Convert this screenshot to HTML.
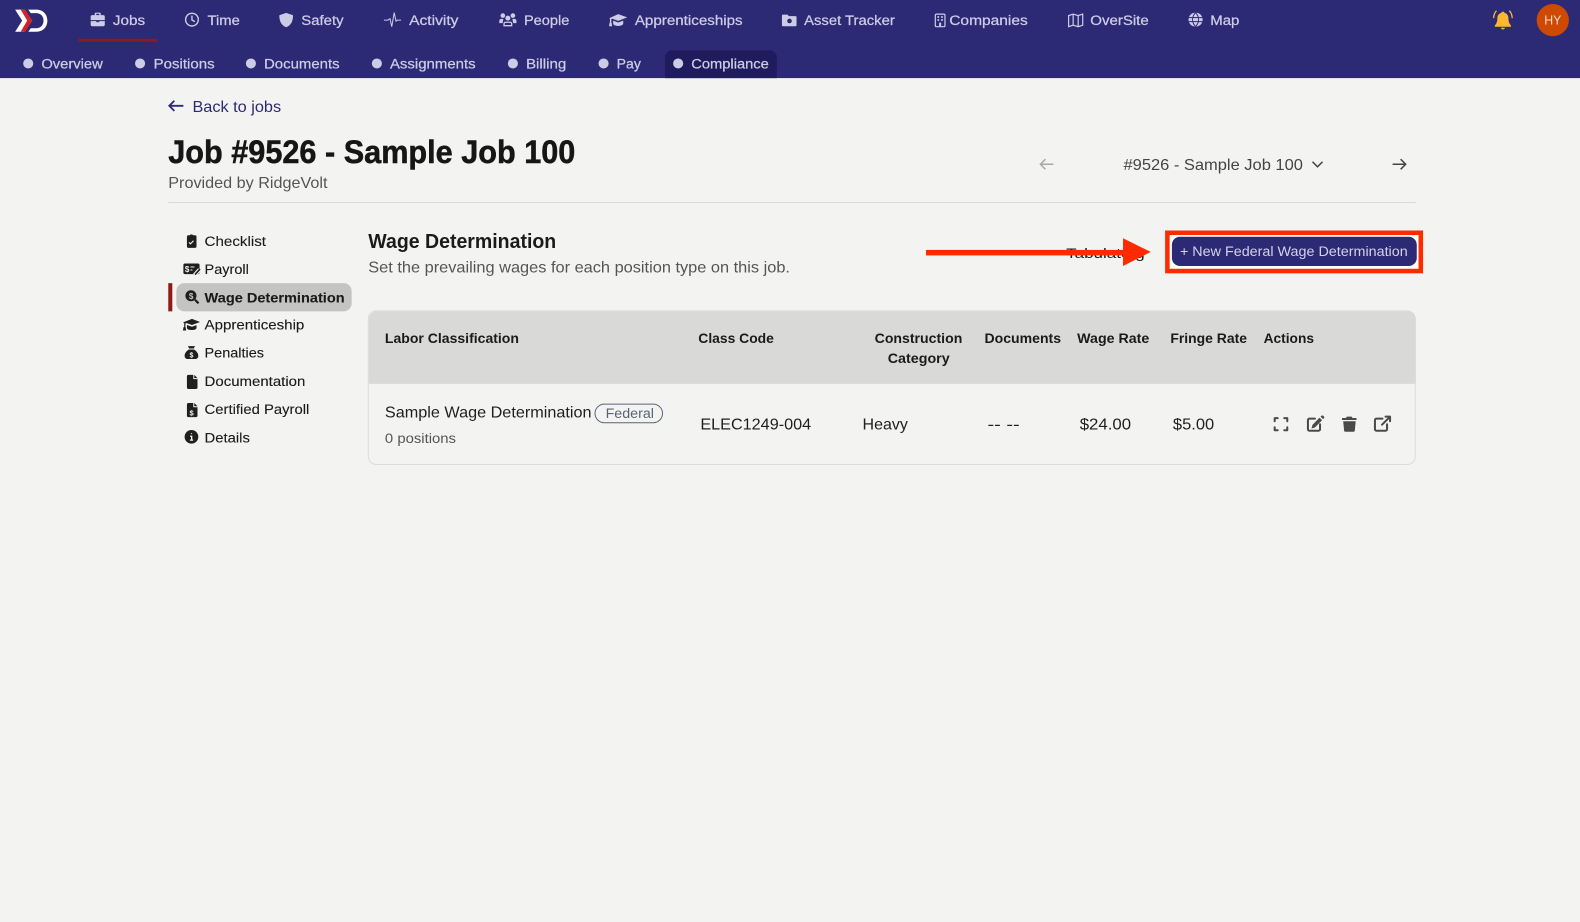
<!DOCTYPE html>
<html lang="en"><head><meta charset="utf-8"><title>Wage Determination</title>
<style>
html,body{margin:0;padding:0;background:#f3f3f1;width:1580px;height:922px;overflow:hidden}
svg{display:block}
text{font-family:"Liberation Sans",sans-serif}
.n{font-size:14px;fill:#cdcce6;stroke:#cdcce6;stroke-width:.25px}
.s{font-size:14px;fill:#1b1b1b;stroke:#1b1b1b;stroke-width:.12px}
.h{font-size:14px;font-weight:bold;fill:#1a1a1a}
.b{font-size:16px;fill:#1f1f1f}
.g{font-size:16px;fill:#555}
.ic{fill:#cdcce6}
.il{fill:none;stroke:#cdcce6;stroke-width:1.4}
.d{fill:#1f1f1f}
.a{fill:none;stroke:#4a4a4a;stroke-width:2;stroke-linecap:round;stroke-linejoin:round}
</style></head><body>
<svg xmlns="http://www.w3.org/2000/svg" width="1580" height="922" viewBox="0 0 1568 915" preserveAspectRatio="none">
<rect width="1568" height="915" fill="#f3f3f1"/>
<rect width="1568" height="77.5" fill="#2c2a75"/>

<!-- logo -->
<path d="M15 9.500h9l8 11-8 11h-9l7-11z" fill="#fff"/>
<path d="M20.500 9.500h4.500l7 11-7 11h-4.500l6.500-11z" fill="#d2232a"/>
<path d="M28 9.500h8c6.500 0 11 4.500 11 11s-4.500 11-11 11h-8l2.500-3.500h5.500c4.500 0 7.200-3.200 7.200-7.500s-2.700-7.500-7.200-7.500h-5.500z" fill="#fff"/>

<!-- main nav -->
<rect x="78" y="38.500" width="78" height="3" fill="#8f1a1a"/>
<path class="ic" d="M90 16.500a1.500 1.500 0 0 1 1.500-1.500h2.500v-1.500a1 1 0 0 1 1-1h4a1 1 0 0 1 1 1V15h2.500a1.500 1.500 0 0 1 1.500 1.500V20h-14zM95.500 13.700V15h3v-1.300zM90 21h5.500v1h3v-1h5.500v3.500a1.500 1.500 0 0 1-1.500 1.500h-11a1.500 1.500 0 0 1-1.500-1.500z"/>
<text class="n" x="112" y="25" textLength="32" lengthAdjust="spacingAndGlyphs">Jobs</text>
<circle class="il" cx="190.500" cy="19.500" r="6.300"/><path class="il" d="M190.500 15.500v4.300l2.800 1.700"/>
<text class="n" x="206" y="25" textLength="32" lengthAdjust="spacingAndGlyphs">Time</text>
<path class="ic" d="M284 12.800l6.800 2.300c0 5.500-1.500 9.600-6.800 12-5.300-2.400-6.800-6.500-6.800-12z"/>
<text class="n" x="299" y="25" textLength="42" lengthAdjust="spacingAndGlyphs">Safety</text>
<path class="il" style="stroke-width:1" d="M381 20h4l2-1.500 1.800 8 2.400-14 1.800 8.500 1.200-1h3.800"/>
<text class="n" x="406" y="25" textLength="49" lengthAdjust="spacingAndGlyphs">Activity</text>
<circle class="ic" cx="499" cy="15.500" r="2.300"/><circle class="ic" cx="509" cy="15.500" r="2.300"/><circle class="ic" cx="504" cy="18" r="2.500"/>
<path class="ic" d="M495.500 23v-2.500c0-1 1-1.800 2-1.800h2l-.8 4.300zM512.500 23v-2.500c0-1-1-1.800-2-1.800h-2l.8 4.300z"/>
<path fill="none" stroke="#cdcce6" stroke-width="1.300" d="M500.200 25.500v-1.800c0-1 .8-1.600 1.700-1.600h4.200c.9 0 1.700.6 1.700 1.600v1.800z"/>
<text class="n" x="520" y="25" textLength="45" lengthAdjust="spacingAndGlyphs">People</text>
<path class="ic" d="M613.500 14l9 3.300-9 3.400-6-2.200-.8.4v4.100h-1.400v-4.600l-.8-.3z"/><path class="ic" d="M608.500 20.500l5 1.800 5-1.800v3c0 1.300-2.300 2.300-5 2.300s-5-1-5-2.300z"/><path class="ic" d="M605 22.500h1.900l.6 3.500h-3.100z"/>
<text class="n" x="630" y="25" textLength="107" lengthAdjust="spacingAndGlyphs">Apprenticeships</text>
<path class="ic" d="M777 14.500h4.500l1.500 1.500h6.500a1 1 0 0 1 1 1v8a1 1 0 0 1-1 1H777a1 1 0 0 1-1-1V15.500a1 1 0 0 1 1-1z"/><circle cx="783.500" cy="20.800" r="2.300" fill="#2c2a75"/>
<text class="n" x="798" y="25" textLength="90" lengthAdjust="spacingAndGlyphs">Asset Tracker</text>
<rect class="il" x="928.200" y="14" width="9.600" height="12.500" rx="1.200" style="stroke-width:1.200"/><path class="ic" d="M930.300 16h1.700v1.700h-1.700zM934 16h1.700v1.700h-1.700zM930.300 19h1.700v1.700h-1.700zM934 19h1.700v1.700h-1.700zM932 22.500h2v3.500h-2z"/>
<text class="n" x="942" y="25" textLength="78" lengthAdjust="spacingAndGlyphs">Companies</text>
<path class="il" style="stroke-width:1.200" d="M1060.500 15.500l4.500-1.500 5 1.500 4.500-1.500v11l-4.500 1.500-5-1.500-4.500 1.500zM1065 14v11M1070 15.500v11"/>
<text class="n" x="1082" y="25" textLength="58" lengthAdjust="spacingAndGlyphs">OverSite</text>
<circle class="ic" cx="1186.500" cy="19.500" r="7"/><path d="M1179.500 17.500h14M1179.500 21.500h14M1186.500 12.500c-4 4.500-4 9.500 0 14M1186.500 12.500c4 4.500 4 9.500 0 14" fill="none" stroke="#2c2a75" stroke-width="1"/>
<text class="n" x="1201" y="25" textLength="29" lengthAdjust="spacingAndGlyphs">Map</text>

<!-- bell / avatar -->
<path fill="#fdb62f" d="M1491.500 11.500c.9 0 1.500.5 1.600 1.300 2.500.6 3.900 2.700 3.900 5.400 0 3.300.9 5.400 2.500 7v1.300h-16v-1.300c1.600-1.600 2.500-3.700 2.500-7 0-2.700 1.400-4.800 3.900-5.400.1-.8.700-1.300 1.600-1.300zM1489.500 27.500h4c-.2 1-.9 1.700-2 1.700s-1.800-.7-2-1.700z"/>
<path fill="none" stroke="#fdb62f" stroke-width="1.300" stroke-linecap="round" d="M1482.300 17.500c.2-2.500 1-4.800 2.500-6.500M1500.700 17.500c-.2-2.500-1-4.800-2.500-6.500"/>
<circle cx="1541" cy="20" r="16" fill="#cf4a00"/>
<text x="1532.500" y="24.500" font-size="12.500" fill="#f5dccb" textLength="17" lengthAdjust="spacingAndGlyphs">HY</text>

<!-- sub nav -->
<path d="M660 77.500V57a7 7 0 0 1 7-7h97a7 7 0 0 1 7 7v20.500z" fill="#1f1c5e"/>
<g fill="#cdcce6"><circle cx="28" cy="63" r="5"/><circle cx="139" cy="63" r="5"/><circle cx="249" cy="63" r="5"/><circle cx="374" cy="63" r="5"/><circle cx="509" cy="63" r="5"/><circle cx="599" cy="63" r="5"/><circle cx="673" cy="63" r="5"/></g>
<text class="n" x="41" y="68" textLength="61" lengthAdjust="spacingAndGlyphs">Overview</text>
<text class="n" x="152.500" y="68" textLength="60.500" lengthAdjust="spacingAndGlyphs">Positions</text>
<text class="n" x="262" y="68" textLength="75" lengthAdjust="spacingAndGlyphs">Documents</text>
<text class="n" x="387" y="68" textLength="85" lengthAdjust="spacingAndGlyphs">Assignments</text>
<text class="n" x="522" y="68" textLength="40" lengthAdjust="spacingAndGlyphs">Billing</text>
<text class="n" x="612" y="68" textLength="24" lengthAdjust="spacingAndGlyphs">Pay</text>
<text class="n" x="686" y="68" textLength="77" lengthAdjust="spacingAndGlyphs">Compliance</text>

<!-- heading -->
<path d="M182 105h-14M173 100l-5 5 5 5" fill="none" stroke="#2c2a75" stroke-width="1.800"/>
<text x="191" y="111" font-size="16" fill="#2c2a75" textLength="88" lengthAdjust="spacingAndGlyphs">Back to jobs</text>
<text x="167" y="162" font-size="32" font-weight="bold" fill="#161616" stroke="#161616" stroke-width=".5" textLength="404" lengthAdjust="spacingAndGlyphs">Job #9526 - Sample Job 100</text>
<text class="g" x="167" y="186.500" textLength="158" lengthAdjust="spacingAndGlyphs">Provided by RidgeVolt</text>
<rect x="167" y="200.500" width="1238" height="1" fill="#d9d9d7"/>

<path d="M1045.500 163h-13M1037.500 158l-5 5 5 5" fill="none" stroke="#a9a9a9" stroke-width="1.500"/>
<text x="1115" y="168.500" font-size="16" fill="#444" textLength="178" lengthAdjust="spacingAndGlyphs">#9526 - Sample Job 100</text>
<path d="M1302.500 160.500l5 5 5-5" fill="none" stroke="#444" stroke-width="1.500"/>
<path d="M1382 163h13M1390 158l5 5-5 5" fill="none" stroke="#444" stroke-width="1.500"/>

<!-- sidebar -->
<rect x="167" y="281" width="4" height="28" fill="#8f1a1a"/>
<rect x="175" y="281" width="174" height="28" rx="8" fill="#c4c4c2"/>
<path class="d" d="M186.500 233.500h1.800a2 2 0 0 1 3.400 0h1.800a1.500 1.500 0 0 1 1.500 1.500v9.500a1.500 1.500 0 0 1-1.500 1.500h-6.500a1.500 1.500 0 0 1-1.500-1.500V235a1.500 1.500 0 0 1 1-1.500z"/><path d="M187.500 240.500l1.500 1.500 3-3" fill="none" stroke="#f3f3f1" stroke-width="1.100"/>
<text class="s" x="203" y="244" textLength="61" lengthAdjust="spacingAndGlyphs">Checklist</text>
<rect class="d" x="182" y="261.500" width="16" height="10.500" rx="1.500"/><text x="183.500" y="270" font-size="8" font-weight="bold" fill="#f3f3f1">$</text><path d="M189 265h4M189 268h2" stroke="#f3f3f1" stroke-width="1" fill="none"/><path d="M193 273l5-5.500" stroke="#f3f3f1" stroke-width="3.800"/><path d="M193.500 272.500l5-5.500" stroke="#1f1f1f" stroke-width="1.600"/>
<text class="s" x="203" y="272" textLength="44" lengthAdjust="spacingAndGlyphs">Payroll</text>
<circle cx="189.500" cy="293.500" r="5.500" fill="#1f1f1f"/><path d="M193.500 297.500l3.500 3.500" stroke="#1f1f1f" stroke-width="2.200"/><text x="187.500" y="296.500" font-size="8" font-weight="bold" fill="#c4c4c2">$</text>
<text class="s" x="203" y="300" font-weight="bold" textLength="139" lengthAdjust="spacingAndGlyphs" style="stroke-width:.1px">Wage Determination</text>
<path class="d" d="M190.500 316.500l8 3-8 3-5.500-2-1 .5v3.500h-1.200v-4l-1.300-.5z"/><path class="d" d="M185.500 322.500l5 1.800 4.500-1.700v2.900c0 1.200-2 2-4.700 2s-4.800-.8-4.800-2z"/><path class="d" d="M182.200 324.500h1.900l.7 3.500h-3.300z"/>
<text class="s" x="203" y="327" textLength="99" lengthAdjust="spacingAndGlyphs">Apprenticeship</text>
<path class="d" d="M186.500 343.500h7l-1.200 2.400h-4.600zM187.500 346.800h5c2.600 1.500 4.300 3.900 4.300 6.200 0 2-1.300 3.300-3.200 3.300h-7.200c-1.900 0-3.200-1.300-3.200-3.300 0-2.300 1.700-4.700 4.300-6.200z"/><text x="188" y="355" font-size="7" font-weight="bold" fill="#f3f3f1">$</text>
<text class="s" x="203" y="355" textLength="59" lengthAdjust="spacingAndGlyphs">Penalties</text>
<path class="d" d="M187 372h4.800v4.200h4.200v8.300a1.500 1.500 0 0 1-1.500 1.500h-7.500a1.500 1.500 0 0 1-1.500-1.500V373.500a1.500 1.500 0 0 1 1.500-1.500zM192.800 372l3.200 3.200h-3.200z"/>
<text class="s" x="203" y="383" textLength="100" lengthAdjust="spacingAndGlyphs">Documentation</text>
<path class="d" d="M187 400h4.800v4.200h4.200v8.300a1.500 1.500 0 0 1-1.500 1.500h-7.500a1.500 1.500 0 0 1-1.500-1.500V401.500a1.500 1.500 0 0 1 1.500-1.500zM192.800 400l3.200 3.200h-3.200z"/><text x="188" y="412.500" font-size="7.500" font-weight="bold" fill="#f3f3f1">$</text>
<text class="s" x="203" y="411" textLength="104" lengthAdjust="spacingAndGlyphs">Certified Payroll</text>
<circle cx="190" cy="433.500" r="6.800" fill="#1f1f1f"/><path d="M190 430v.8M188.700 433h1.500v3.500M188.500 436.800h3.200" stroke="#f3f3f1" stroke-width="1.300" fill="none"/>
<text class="s" x="203" y="439" textLength="45" lengthAdjust="spacingAndGlyphs">Details</text>

<!-- section head -->
<text x="365.500" y="246" font-size="20" font-weight="bold" fill="#1b1b1b" textLength="186.500" lengthAdjust="spacingAndGlyphs">Wage Determination</text>
<text class="g" x="365.500" y="270.500" textLength="418.500" lengthAdjust="spacingAndGlyphs">Set the prevailing wages for each position type on this job.</text>

<text x="1058" y="256" font-size="14" fill="#1b1b1b" textLength="78" lengthAdjust="spacingAndGlyphs">Tabulate g</text>
<rect x="919" y="248" width="198" height="5.500" fill="#ff2a00"/>
<path d="M1114.500 236.500l27.500 13.500-27.500 14z" fill="#ff2a00"/>

<rect x="1158.500" y="231" width="251.500" height="38" fill="#fff" stroke="#ff2a00" stroke-width="4.500"/>
<rect x="1163" y="235" width="243" height="29" rx="8" fill="#2c2a75"/>
<text x="1171" y="254" font-size="14" fill="#d3d2ea" textLength="226" lengthAdjust="spacingAndGlyphs">+ New Federal Wage Determination</text>

<!-- table -->
<rect x="365.500" y="308.500" width="1039" height="152.500" rx="8" fill="#f3f3f1" stroke="#dcdcda"/>
<path d="M366 381V317a8 8 0 0 1 8-8h1023a8 8 0 0 1 8 8v64z" fill="#d9d9d7"/>
<text class="h" x="382" y="340.500" textLength="133" lengthAdjust="spacingAndGlyphs">Labor Classification</text>
<text class="h" x="693" y="340.500" textLength="75" lengthAdjust="spacingAndGlyphs">Class Code</text>
<text class="h" x="868" y="340.500" textLength="87" lengthAdjust="spacingAndGlyphs">Construction</text>
<text class="h" x="881" y="360.500" textLength="61.500" lengthAdjust="spacingAndGlyphs">Category</text>
<text class="h" x="977" y="340.500" textLength="76" lengthAdjust="spacingAndGlyphs">Documents</text>
<text class="h" x="1069" y="340.500" textLength="71.500" lengthAdjust="spacingAndGlyphs">Wage Rate</text>
<text class="h" x="1161.500" y="340.500" textLength="76" lengthAdjust="spacingAndGlyphs">Fringe Rate</text>
<text class="h" x="1254" y="340.500" textLength="50" lengthAdjust="spacingAndGlyphs">Actions</text>

<text class="b" x="382" y="414.500" textLength="205" lengthAdjust="spacingAndGlyphs">Sample Wage Determination</text>
<rect x="590.500" y="401" width="67" height="18.500" rx="9.250" fill="none" stroke="#5a6478"/>
<text x="601" y="415" font-size="14" fill="#5a6478" textLength="48" lengthAdjust="spacingAndGlyphs">Federal</text>
<text x="382" y="439.500" font-size="14" fill="#555" textLength="70.500" lengthAdjust="spacingAndGlyphs">0 positions</text>
<text class="b" x="695" y="426.500" textLength="110" lengthAdjust="spacingAndGlyphs">ELEC1249-004</text>
<text class="b" x="856" y="426.500" textLength="45" lengthAdjust="spacingAndGlyphs">Heavy</text>
<text class="b" x="980" y="426.500" textLength="32" lengthAdjust="spacingAndGlyphs">-- --</text>
<text class="b" x="1071.500" y="426.500" textLength="51" lengthAdjust="spacingAndGlyphs">$24.00</text>
<text class="b" x="1164" y="426.500" textLength="41" lengthAdjust="spacingAndGlyphs">$5.00</text>

<!-- action icons -->
<path class="a" stroke-linecap="square" d="M1265 418v-3h3M1274.500 415h3v3M1277.500 424v3h-3M1268 427h-3v-3"/>
<path class="a" d="M1305 415.500h-5.500a1.500 1.500 0 0 0-1.500 1.500v9a1.500 1.500 0 0 0 1.500 1.500h9a1.500 1.500 0 0 0 1.500-1.500V421"/>
<path fill="#4a4a4a" d="M1309.500 414.500l2.500 2.500-7 7.200-3.500 1 1-3.500zM1310.500 413.500l1.200-1a1 1 0 0 1 1.300 0l1 1a1 1 0 0 1 0 1.300l-1 1.200z"/>
<path fill="#4a4a4a" d="M1336.500 413.500h5l.7 1.300h4v2h-14.400v-2h4zM1333 418h12.400l-.9 9.500a1.200 1.200 0 0 1-1.200 1h-8.200a1.200 1.200 0 0 1-1.200-1z"/>
<path class="a" d="M1372 415.500h-6a1.500 1.500 0 0 0-1.500 1.500v9a1.500 1.500 0 0 0 1.500 1.500h9a1.500 1.500 0 0 0 1.500-1.500V421"/>
<path class="a" d="M1371.500 421.500l8-8M1375 413.500h4.500v4.500"/>
</svg>
</body></html>
